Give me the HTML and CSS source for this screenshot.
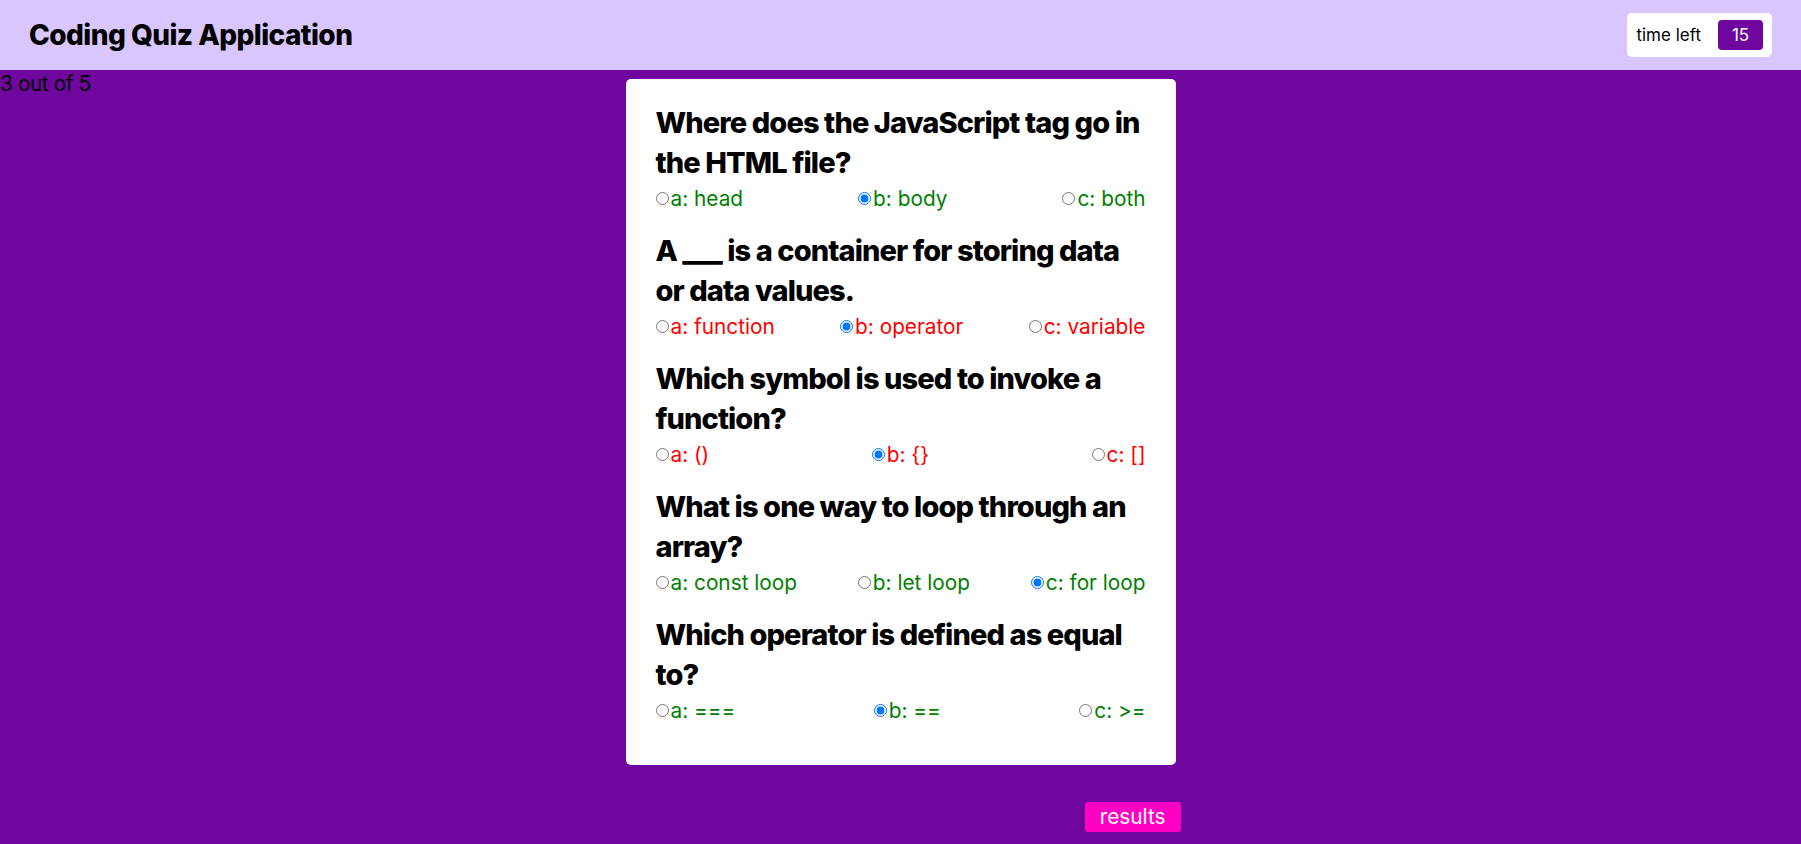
FILE: index.html
```html
<!DOCTYPE html>
<html lang="en">
<head>
<meta charset="utf-8">
<title>Coding Quiz Application</title>
<link rel="stylesheet" href="styles.css">
</head>
<body>
<header class="topbar">
  <h1 class="brand">Coding Quiz Application</h1>
  <div class="timer">
    <span class="timer-label">time left</span>
    <span class="timer-count">15</span>
  </div>
</header>
<main class="stage">
  <p class="progress">3 out of 5</p>
  <section class="quiz-card">
    <div class="question">
      <h2 class="question-title">Where does the JavaScript tag go in the HTML file?</h2>
      <div class="options is-correct">
        <label class="option"><input type="radio" name="q1">a: head</label>
        <label class="option"><input type="radio" name="q1" checked>b: body</label>
        <label class="option"><input type="radio" name="q1">c: both</label>
      </div>
    </div>
    <div class="question">
      <h2 class="question-title">A ___ is a container for storing data or data values.</h2>
      <div class="options is-wrong">
        <label class="option"><input type="radio" name="q2">a: function</label>
        <label class="option"><input type="radio" name="q2" checked>b: operator</label>
        <label class="option"><input type="radio" name="q2">c: variable</label>
      </div>
    </div>
    <div class="question">
      <h2 class="question-title">Which symbol is used to invoke a function?</h2>
      <div class="options is-wrong">
        <label class="option"><input type="radio" name="q3">a: ()</label>
        <label class="option"><input type="radio" name="q3" checked>b: {}</label>
        <label class="option"><input type="radio" name="q3">c: []</label>
      </div>
    </div>
    <div class="question">
      <h2 class="question-title">What is one way to loop through an array?</h2>
      <div class="options is-correct">
        <label class="option"><input type="radio" name="q4">a: const loop</label>
        <label class="option"><input type="radio" name="q4">b: let loop</label>
        <label class="option"><input type="radio" name="q4" checked>c: for loop</label>
      </div>
    </div>
    <div class="question">
      <h2 class="question-title">Which operator is defined as equal to?</h2>
      <div class="options is-correct">
        <label class="option"><input type="radio" name="q5">a: ===</label>
        <label class="option"><input type="radio" name="q5" checked>b: ==</label>
        <label class="option"><input type="radio" name="q5">c: &gt;=</label>
      </div>
    </div>
  </section>
  <div class="actions">
    <button class="results-btn" type="button">results</button>
  </div>
</main>
</body>
</html>
```

FILE: styles.css
```css
* { box-sizing: border-box; }

html, body {
  margin: 0;
  padding: 0;
}

body {
  background: #6f069d;
  font-family: Inter, "Noto Sans", "Liberation Sans", sans-serif;
  color: #000;
  min-height: 100vh;
}

.topbar {
  height: 70px;
  background: #d9c6fd;
  display: flex;
  align-items: center;
  justify-content: space-between;
  padding: 0 29px;
}

.brand {
  margin: 0;
  font-size: 28px;
  font-weight: 800;
  letter-spacing: -0.55px;
  line-height: 1;
}

.timer {
  background: #fff;
  border-radius: 5px;
  padding: 7px 9px;
  display: flex;
  align-items: center;
  gap: 17px;
}

.timer-label {
  font-size: 17px;
  line-height: 30px;
}

.timer-count {
  width: 45px;
  height: 30px;
  border-radius: 4px;
  background: #6f069d;
  color: #fff;
  font-size: 17px;
  display: flex;
  align-items: center;
  justify-content: center;
}

.stage {
  display: grid;
  grid-template-columns: 1fr 550px 1fr;
  align-items: start;
}

.progress {
  grid-column: 1;
  grid-row: 1;
  margin: 2px 0 0;
  font-size: 20.8px;
  line-height: 24px;
  letter-spacing: -0.4px;
}

.quiz-card {
  grid-column: 2;
  grid-row: 1;
  margin-top: 9px;
  background: #fff;
  border-radius: 5px;
  padding: 24px 30px 22px;
}

.question {
  margin-bottom: 18px;
}

.question-title {
  margin: 0;
  font-size: 29px;
  font-weight: 800;
  line-height: 40px;
  letter-spacing: -0.9px;
}

.options {
  display: flex;
  justify-content: space-between;
  align-items: center;
  height: 30px;
  font-size: 20.8px;
}

.options.is-correct { color: #008000; }
.options.is-wrong { color: #ff0000; }

.option {
  display: inline-flex;
  align-items: center;
  gap: 2px;
}

.option input {
  margin: 0;
  width: 13px;
  height: 13px;
}

.actions {
  grid-column: 2;
  grid-row: 2;
  display: flex;
  justify-content: flex-end;
  margin: 37px -5px 0 0;
}

.results-btn {
  background: #ff00c4;
  color: #fff;
  border: none;
  border-radius: 3px;
  height: 30px;
  padding: 0 15px;
  font-family: inherit;
  font-size: 20.8px;
  line-height: 30px;
}
```
